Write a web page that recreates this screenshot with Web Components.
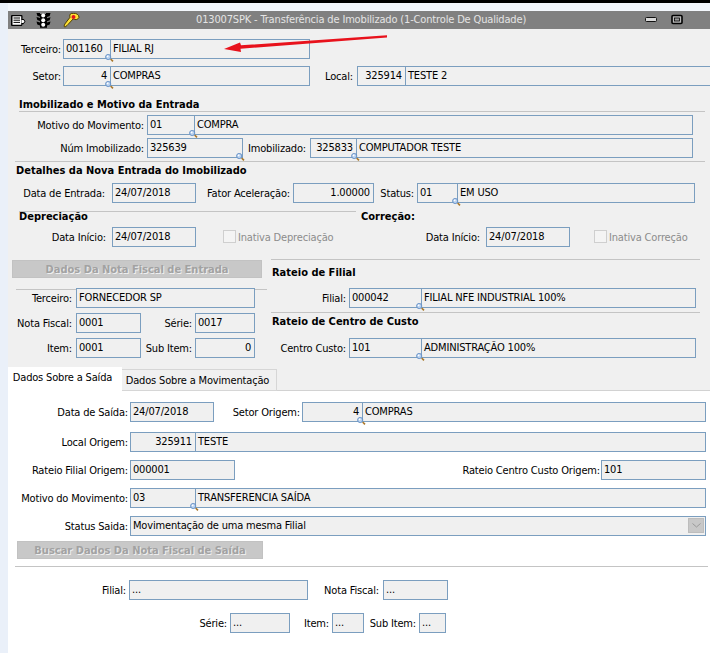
<!DOCTYPE html>
<html lang="pt"><head><meta charset="utf-8"><title>013007SPK</title>
<style>
html,body{margin:0;padding:0;width:710px;height:653px;overflow:hidden;background:#000}
body{font:11px/14px "DejaVu Sans Condensed","DejaVu Sans",sans-serif;font-stretch:condensed;color:#000;letter-spacing:-.17px}
</style></head><body>
<erp-window>
  <erp-titlebar slot="title">013007SPK - Transferência de Imobilizado (1-Controle De Qualidade)</erp-titlebar>
  <erp-form>
    <erp-row t="10"><erp-label w="55" pr="2">Terceiro:</erp-label><erp-field w="247" cw="47" code="001160" text="FILIAL RJ" lookup></erp-field></erp-row>
    <erp-row t="7"><erp-label w="55" pr="2">Setor:</erp-label><erp-field w="247" cw="47" code="4" right text="COMPRAS" lookup></erp-field><erp-label w="47" pr="4">Local:</erp-label><erp-field w="360" cw="48" code="325914" right text="TESTE 2"></erp-field></erp-row>
    <erp-heading t="11" l="11">Imobilizado e Motivo da Entrada</erp-heading>
    <erp-rule l="11" w="686"></erp-rule>
    <erp-row t="3"><erp-label w="139" pr="3">Motivo do Movimento:</erp-label><erp-field w="546" cw="47" code="01" text="COMPRA" lookup></erp-field></erp-row>
    <erp-row t="3"><erp-label w="139" pr="3">Núm Imobilizado:</erp-label><erp-field w="96" code="325639" lookup></erp-field><erp-label w="67" pr="4">Imobilizado:</erp-label><erp-field w="383" cw="46" code="325833" right text="COMPUTADOR TESTE" lookup></erp-field></erp-row>
    <erp-rule t="3" l="7" w="690"></erp-rule>
    <erp-heading t="1" l="8">Detalhes da Nova Entrada do Imobilizado</erp-heading>
    <erp-row t="6"><erp-label w="104" pr="7">Data de Entrada:</erp-label><erp-field w="84" code="24/07/2018"></erp-field><erp-label w="97" pr="3">Fator Aceleração:</erp-label><erp-field w="81" code="1.00000" right></erp-field><erp-label w="43" pr="3">Status:</erp-label><erp-field w="278" cw="40" code="01" text="EM USO" lookup></erp-field></erp-row>
    <erp-rule t="8" l="11" w="337"></erp-rule>
    <erp-headrow><erp-heading l="11" w="342" lh="8">Depreciação</erp-heading><erp-heading lh="8">Correção:</erp-heading></erp-headrow>
    <erp-row t="7"><erp-label w="104" pr="6">Data Início:</erp-label><erp-field w="84" code="24/07/2018"></erp-field><erp-check ml="27" w="113">Inativa Depreciação</erp-check><erp-label w="150" pr="6">Data Início:</erp-label><erp-field w="84" code="24/07/2018"></erp-field><erp-check ml="24">Inativa Correção</erp-check></erp-row>
    <erp-columns t="12">
      <erp-col slot="a" w="260">
        <erp-button t="1" l="4" w="250">Dados Da Nota Fiscal de Entrada</erp-button>
        <erp-rule t="11" l="8" w="251"></erp-rule>
        <erp-row t="-2"><erp-label w="68" pr="4">Terceiro:</erp-label><erp-field w="179" code="FORNECEDOR SP"></erp-field></erp-row>
        <erp-row t="5"><erp-label w="68" pr="4">Nota Fiscal:</erp-label><erp-field w="65" code="0001"></erp-field><erp-label w="54" pr="3">Série:</erp-label><erp-field w="60" code="0017"></erp-field></erp-row>
        <erp-row t="5"><erp-label w="68" pr="4">Item:</erp-label><erp-field w="65" code="0001"></erp-field><erp-label w="54" pr="3">Sub Item:</erp-label><erp-field w="60" code="0" right></erp-field></erp-row>
      </erp-col>
      <erp-col slot="b" w="442">
        <erp-rule l="3" w="429"></erp-rule>
        <erp-heading t="5" l="4">Rateio de Filial</erp-heading>
        <erp-row t="9"><erp-label w="81" pr="3">Filial:</erp-label><erp-field w="347" cw="72" code="000042" text="FILIAL NFE INDUSTRIAL 100%" lookup></erp-field></erp-row>
        <erp-rule t="4" l="3" w="429"></erp-rule>
        <erp-heading t="1" l="4">Rateio de Centro de Custo</erp-heading>
        <erp-row t="10"><erp-label w="81" pr="3">Centro Custo:</erp-label><erp-field w="347" cw="72" code="101" text="ADMINISTRAÇÃO 100%" lookup></erp-field></erp-row>
      </erp-col>
    </erp-columns>
    <erp-tabs t="9"><erp-tab active>Dados Sobre a Saída</erp-tab><erp-tab>Dados Sobre a Movimentação</erp-tab></erp-tabs>
  </erp-form>
  <erp-panel>
    <erp-row t="11"><erp-label w="122" pr="2">Data de Saída:</erp-label><erp-field w="84" code="24/07/2018"></erp-field><erp-label w="88" pr="2">Setor Origem:</erp-label><erp-field w="404" cw="60" code="4" right text="COMPRAS" lookup></erp-field></erp-row>
    <erp-row t="10"><erp-label w="122" pr="2">Local Origem:</erp-label><erp-field w="576" cw="65" code="325911" right text="TESTE"></erp-field></erp-row>
    <erp-row t="8"><erp-label w="122" pr="2">Rateio Filial Origem:</erp-label><erp-field w="105" code="000001"></erp-field><erp-label w="366" pr="1">Rateio Centro Custo Origem:</erp-label><erp-field w="105" code="101"></erp-field></erp-row>
    <erp-row t="8"><erp-label w="122" pr="2">Motivo do Movimento:</erp-label><erp-field w="576" cw="65" code="03" text="TRANSFERENCIA SAÍDA" lookup></erp-field></erp-row>
    <erp-row t="8"><erp-label w="122" pr="2">Status Saida:</erp-label><erp-field w="576" code="Movimentação de uma mesma Filial" select></erp-field></erp-row>
    <erp-button t="5" l="9" w="246">Buscar Dados Da Nota Fiscal de Saída</erp-button>
    <erp-rule t="7" l="7" w="693"></erp-rule>
    <erp-row t="13"><erp-label w="121" pr="3">Filial:</erp-label><erp-field w="179" code="..."></erp-field><erp-label w="75" pr="4">Nota Fiscal:</erp-label><erp-field w="65" code="..."></erp-field></erp-row>
    <erp-row t="13"><erp-label w="222" pr="3">Série:</erp-label><erp-field w="60" code="..."></erp-field><erp-label w="42" pr="3">Item:</erp-label><erp-field w="32" code="..."></erp-field><erp-label w="55" pr="3">Sub Item:</erp-label><erp-field w="27" code="..."></erp-field></erp-row>
  </erp-panel>
</erp-window>
<script>
const mk=(name,css,html,init)=>customElements.define(name,class extends HTMLElement{
  connectedCallback(){
    if(this.shadowRoot)return;
    const s=this.attachShadow({mode:'open'});
    const a=n=>this.getAttribute(n);
    const has=n=>this.hasAttribute(n);
    s.innerHTML='<style>'+css+'</style>'+(typeof html==='function'?html(a,has):html);
    if(a('t'))this.style.marginTop=a('t')+'px';
    if(a('l'))this.style.marginLeft=a('l')+'px';
    if(a('w'))this.style.width=a('w')+'px';
    if(a('pr'))this.style.paddingRight=a('pr')+'px';
    if(init)init(this,a,has);
  }
});
mk('erp-window',`:host{display:flex;flex-direction:column;position:relative;box-sizing:border-box;width:710px;height:650px;margin-top:3px;background:#f3f7fc;border-left:8px solid #eaf0f9;padding-top:8px;overflow:hidden}
 svg{position:absolute;left:-8px;top:-3px;pointer-events:none}`,
 `<slot name="title"></slot><slot></slot><svg width="710" height="653" viewBox="0 0 710 653"><path d="M387 35.2 241 45.3 240 42.6 224 49 241 52 240.5 48.7 387 37.6Z" fill="#e8121c"/></svg>`);
mk('erp-titlebar',`:host{display:flex;align-items:center;height:18px;background:#808080;color:#e4e4e4;line-height:20px;position:relative;flex:none}
 .icons{position:absolute;left:0;top:0;display:block}
 .t{margin-left:188px;white-space:nowrap;letter-spacing:-.16px}`,
 `<svg class="icons" width="702" height="18" viewBox="8 11 702 18">
  <path d="M12 15h9.5a1 1 0 0 1 1 1v3h1.3l1.7 2.4-2.2 2.8h-1V25a1 1 0 0 1-1 1H12a1 1 0 0 1-1-1V16a1 1 0 0 1 1-1Z" fill="#000"/>
  <path d="M12.5 16.3h8.7v8.5h-8.7Z" fill="#fff"/><path d="M13.5 18h6.5M13.5 20.2h6.5M13.5 22.4h6.5" stroke="#000" stroke-width="1"/><path d="M21.5 20h2l1 1.4-1.2 1.6h-1.8Z" fill="#fff"/>
  <path d="M36.5 13h3.5v1h6v-1h4.5l-.8 3-2.7 1v1.3l3.5-1-.8 3-2.7 1v1.3l3.5-1-.8 3-2.7 1v2.2h-7v-2.2l-2.7-1-.8-3 3.5 1V21l-2.7-1-.8-3 3.5 1v-1.3l-2.7-1Z" fill="#000"/>
  <circle cx="43.2" cy="15.6" r="2" fill="#fff"/><circle cx="43.2" cy="20.2" r="2" fill="#fff"/><circle cx="43.2" cy="24.8" r="2" fill="#fff"/>
  <path d="M73.5 13.4c2.8-.5 5.4 1.4 5.5 3.8.1 1-1.6 2.2-2.7 2.4-1.2.2-2.2-.2-3.1-.7l-5.4 5.8c-1 1.2-2.8 2.6-3.3 2.2-.8-.7.1-2.7 1-3.8l4.6-5.9c-.7-1.3-.3-3.1 1-3.8Z" fill="#ffe135" stroke="#4d3d00" stroke-width="1"/>
  <circle cx="73.5" cy="17" r="2" fill="#e0141c"/>
  <rect x="645.5" y="17.5" width="11" height="4" rx="1" fill="#d8d8d8" stroke="#111"/>
  <rect x="672" y="15.5" width="10" height="8" rx="1" fill="#bbb" stroke="#000" stroke-width="1.6"/><rect x="674.5" y="18" width="5" height="3" fill="#999" stroke="#000" stroke-width=".8"/>
 </svg><span class="t"><slot></slot></span>`);
mk('erp-form',`:host{display:block;background:#f0f0f0;flex:none}`,`<slot></slot>`);
mk('erp-panel',`:host{display:block;background:#fff;flex:1;min-height:0}`,`<slot></slot>`);
mk('erp-row',`:host{display:flex;align-items:flex-start;height:20px;white-space:nowrap}`,`<slot></slot>`);
mk('erp-headrow',`:host{display:flex;height:8px}`,`<slot></slot>`);
mk('erp-label',`:host{display:block;flex:none;box-sizing:border-box;text-align:right;line-height:22px;height:20px;white-space:nowrap}`,`<slot></slot>`);
mk('erp-field',`:host{display:block;flex:none;position:relative;box-sizing:border-box;height:20px}
 .box{display:flex;height:100%;box-sizing:border-box;border:1px solid #7b9ebf;background:#f0f0f0;line-height:18px;overflow:hidden;white-space:nowrap}
 .code{flex:none;padding:0 2px;box-sizing:border-box}
 .code.r{text-align:right;padding-right:3px}
 .code.div{border-right:1px solid #7b9ebf;height:100%}
 .code.full{flex:1}
 .desc{flex:1;padding-left:2px}
 svg.lk{position:absolute;bottom:-3px;width:9px;height:8px}
 .dd{position:absolute;right:2px;top:2px;width:16px;height:15px;background:#c8c8c8;border:1px solid #bdbdbd;box-sizing:border-box;display:flex;align-items:center;justify-content:center}`,
 (a,has)=>{
  const cw=a('cw');const text=a('text');
  const codeCss=(cw?'width:'+(+cw)+'px':'');
  const cls='code'+(has('right')?' r':'')+(cw?' div':' full');
  const lookX=cw?(+cw-5):null;
  const lk=has('lookup')?`<svg class="lk" style="${cw?'left:'+lookX+'px':'right:-2px'}" viewBox="0 0 9 8"><path d="M5.6 5 8 7.4" stroke="#a8762a" stroke-width="1.6"/><circle cx="3.2" cy="3" r="2.6" fill="#b8d0ee" stroke="#5f8cc4" stroke-width=".9"/><circle cx="2.6" cy="2.4" r=".9" fill="#fff"/></svg>`:'';
  const dd=has('select')?`<div class="dd"><svg width="9" height="5" viewBox="0 0 9 5"><path d="M.5.5 4.5 4 8.5.5" fill="none" stroke="#999"/></svg></div>`:'';
  return `<div class="box"><div class="${cls}" style="${codeCss}">${a('code')||''}</div>${text?`<div class="desc">${text}</div>`:''}</div>${lk}${dd}`;
 });
mk('erp-heading',`:host{display:block;font-weight:700;letter-spacing:0;white-space:nowrap;height:14px;line-height:16px;flex:none}`,`<slot></slot>`,(el,a)=>{if(a('lh')){el.style.height=a('lh')+'px';el.style.lineHeight=(+a('lh')+2)+'px';}});
mk('erp-rule',`:host{display:block;height:1px;background:#c4c4c4}`,``);
mk('erp-check',`:host{display:flex;align-items:center;flex:none;color:#8c8c8c;height:20px;padding-top:2px;box-sizing:border-box}
 i{display:block;width:13px;height:13px;box-sizing:border-box;border:1px solid #cfcfcf;background:#f4f4f4;margin:-3px 2px 0 0}`,`<i></i><slot></slot>`,(el,a)=>{el.style.marginLeft=a('ml')+'px';});
mk('erp-columns',`:host{display:flex;height:99px}`,`<slot name="a"></slot><slot name="b"></slot>`);
mk('erp-col',`:host{display:block;flex:none}`,`<slot></slot>`);
mk('erp-button',`:host{display:block;box-sizing:border-box;height:18px;background:#c8c8c8;border:1px solid #c2c2c2;color:#a2a2a2;font-weight:700;letter-spacing:0;text-align:center;line-height:17px;text-shadow:1px 1px 0 #efefef;white-space:nowrap}`,`<slot></slot>`);
mk('erp-tabs',`:host{display:flex;align-items:flex-end;height:24px;position:relative;margin-left:-1px}
 :host::after{content:"";flex:1;height:1px;background:#d2d2d2;margin-bottom:0}`,`<slot></slot>`);
mk('erp-tab',`:host{display:block;box-sizing:border-box;white-space:nowrap;text-align:center;width:155px;height:22px;background:#f0f0f0;border:1px solid #d6d6d6;border-left:0;line-height:22px;padding-right:3px}
 :host([active]){width:115px;height:24px;background:#fff;border:0;line-height:22px;padding-right:4px}`,`<slot></slot>`);
</script>
</body></html>
